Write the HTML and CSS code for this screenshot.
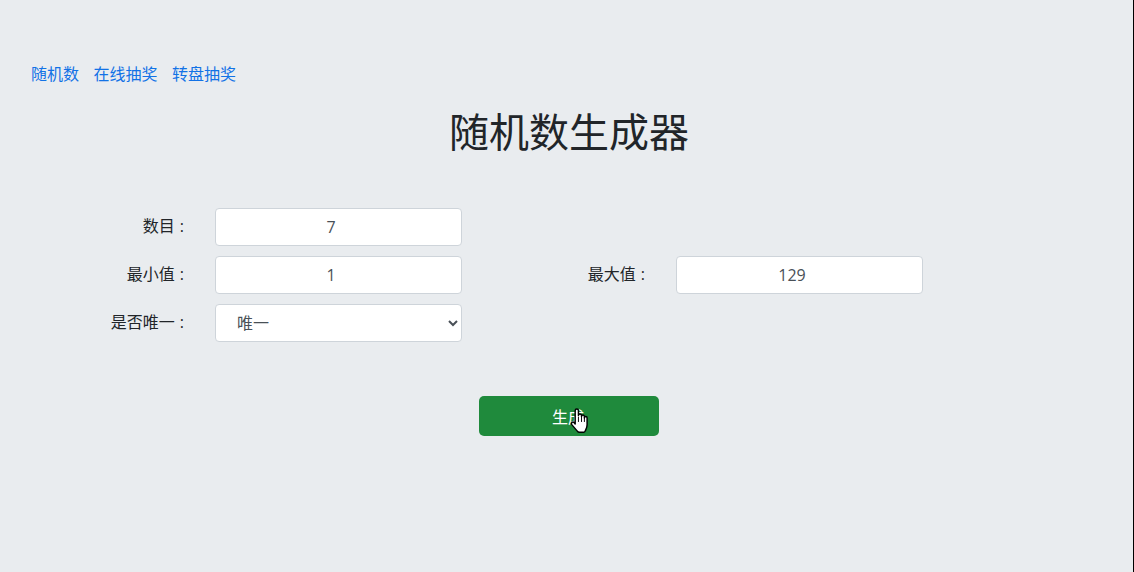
FILE: index.html
```html
<!DOCTYPE html>
<html lang="zh-CN">
<head>
<meta charset="utf-8">
<title>随机数生成器</title>
<link rel="stylesheet" href="styles.css">
</head>
<body>
<div class="page">
  <nav class="nav">
    <a href="#">随机数</a>
    <a href="#">在线抽奖</a>
    <a href="#">转盘抽奖</a>
  </nav>
  <h1 class="title">随机数生成器</h1>
  <form class="form">
    <label class="label">数目 :</label>
    <input class="field" type="text" value="7">
    <span class="blank"></span>
    <label class="label">最小值 :</label>
    <input class="field" type="text" value="1">
    <label class="label">最大值 :</label>
    <input class="field" type="text" value="129">
    <label class="label">是否唯一 :</label>
    <select class="field select"><option>唯一</option><option>不唯一</option></select>
    <span class="blank"></span>
  </form>
  <div class="actions">
    <button class="btn" type="button">生成</button>
    <svg class="cursor" width="19" height="25" viewBox="0 0 19 26" aria-hidden="true">
      <path d="M5 14V2.800a1.700 1.700 0 0 1 3.400 0v5a1.600 1.600 0 0 1 3.200 0v1a1.500 1.500 0 0 1 3 0v1.500a1.400 1.400 0 0 1 2.800 0v7c0 3-1.100 4.500-1.900 6.500q-.5 1.500-2.100 1.500H9.500q-1.500 0-2.500-1.500L1.500 17.300c-1.200-1.700.9-3.600 2.400-2.100L5 16.600z" fill="#fff" stroke="#000" stroke-width="1.500" stroke-linejoin="round"/>
      <path d="M8.400 9v5.500M11.600 9v5.500M14.600 10v4.500" stroke="#000" stroke-width="1" fill="none"/>
    </svg>
  </div>
</div>
</body>
</html>
```
FILE: styles.css
```css
* { box-sizing: border-box; }
html, body { margin: 0; padding: 0; }
body {
  background: #000;
  color: #212529;
  font-family: "Open Sans", "Noto Sans CJK SC", sans-serif;
  font-size: 16px;
}
.page {
  width: 1133px;
  height: 572px;
  background: #e9ecef;
  overflow: hidden;
}
.nav {
  display: flex;
  gap: 14.5px;
  padding: 62px 0 0 31px;
  line-height: 24px;
}
.nav a { color: #1272e6; text-decoration: none; }
.title {
  margin: 22px 0 0;
  padding-left: 5px;
  font-size: 40px;
  font-weight: 400;
  line-height: 48px;
  text-align: center;
}
.form {
  display: grid;
  grid-template-columns: 215px 247px 214px 247px;
  row-gap: 10px;
  margin-top: 52px;
}
.label {
  padding-right: 31px;
  line-height: 36px;
  text-align: right;
  word-spacing: 1px;
}
.field {
  width: 247px;
  height: 38px;
  padding: 6px 27px 6px 12px;
  border: 1px solid #ced4da;
  border-radius: 4px;
  background: #fff;
  color: #495057;
  font: inherit;
  text-align: center;
}
.select { padding: 6px 12px 6px 17px; text-align: left; }
.blank { grid-column: span 2; }
.actions {
  position: relative;
  display: flex;
  justify-content: center;
  margin-top: 54px;
  padding-left: 5px;
}
.btn {
  width: 180px;
  height: 40px;
  padding: 0 2px 0 0;
  border: 0;
  border-radius: 5px;
  background: #1f8a3c;
  color: #fff;
  font: inherit;
}
.cursor {
  position: absolute;
  left: 570px;
  top: 12px;
}
```
